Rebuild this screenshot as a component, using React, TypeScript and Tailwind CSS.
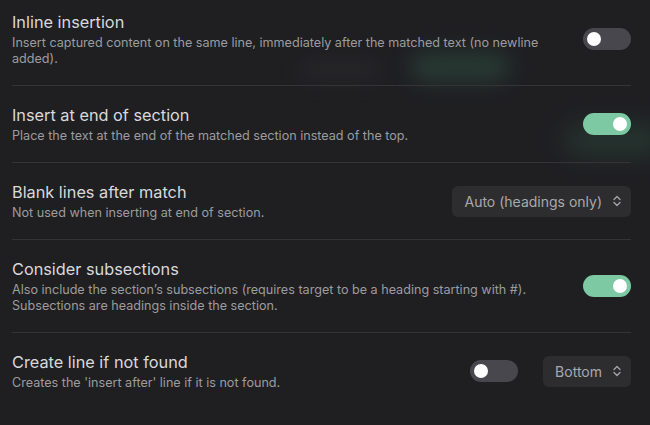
import React from "react";

const Toggle = ({ on }: { on: boolean }) => (
  <div
    className={`flex h-[22px] w-[48px] shrink-0 items-center rounded-full px-[4px] ${
      on ? "justify-end bg-[#7cc9a4]" : "justify-start bg-[#48474d]"
    }`}
  >
    <div className="h-[14px] w-[14px] rounded-full bg-white" />
  </div>
);

const Chevrons = () => (
  <svg width="10" height="12" viewBox="0 0 10 12" fill="none" stroke="#a3a3a6" strokeWidth="1.4" strokeLinecap="round" strokeLinejoin="round">
    <path d="M2 4.5 5 1.5 8 4.5" />
    <path d="M2 7.5 5 10.5 8 7.5" />
  </svg>
);

const Select = ({ value }: { value: string }) => (
  <div className="flex h-[31px] shrink-0 items-center gap-[10px] rounded-md bg-[#2d2d30] pl-[12px] pr-[9px] text-[14px] text-[#a9a9ac]">
    <span>{value}</span>
    <Chevrons />
  </div>
);

const Row = ({
  title,
  desc,
  children,
  last,
}: {
  title: string;
  desc: React.ReactNode;
  children: React.ReactNode;
  last?: boolean;
}) => (
  <div className={`flex items-center gap-6 py-[18px] ${last ? "" : "border-b border-[#343437]"}`}>
    <div className="flex-1">
      <div className="text-[16.3px] leading-[22px] text-[#d9d9db]">{title}</div>
      <div className="mt-[2px] text-[12.6px] leading-[16px] text-[#9c9c9f]">{desc}</div>
    </div>
    <div className="flex items-center gap-[25px]">{children}</div>
  </div>
);

export default function App() {
  return (
    <div
      className="relative h-[425px] w-[650px] overflow-hidden bg-[#1f1f22]"
      style={{ fontFamily: "Inter, 'Noto Sans', sans-serif" }}
    >
      <div className="absolute left-[410px] top-[52px] h-[30px] w-[100px] rounded-full bg-[#2d4a3e] opacity-60 blur-[10px]" />
      <div className="absolute left-[300px] top-[60px] h-[20px] w-[80px] rounded-full bg-[#2a2a2d] opacity-70 blur-[10px]" />
      <div className="absolute left-[565px] top-[125px] h-[30px] w-[100px] rounded-full bg-[#2b4439] opacity-60 blur-[12px]" />
      <div className="relative ml-[12px] mr-[19px] -mt-[7px]">
        <Row
          title="Inline insertion"
          desc="Insert captured content on the same line, immediately after the matched text (no newline added)."
        >
          <Toggle on={false} />
        </Row>
        <Row title="Insert at end of section" desc="Place the text at the end of the matched section instead of the top.">
          <Toggle on />
        </Row>
        <Row title="Blank lines after match" desc="Not used when inserting at end of section.">
          <Select value="Auto (headings only)" />
        </Row>
        <Row
          title="Consider subsections"
          desc={
            <>
              Also include the section’s subsections (requires target to be a heading starting with #).
              <br />
              Subsections are headings inside the section.
            </>
          }
        >
          <Toggle on />
        </Row>
        <Row title="Create line if not found" desc="Creates the 'insert after' line if it is not found." last>
          <Toggle on={false} />
          <Select value="Bottom" />
        </Row>
      </div>
    </div>
  );
}
